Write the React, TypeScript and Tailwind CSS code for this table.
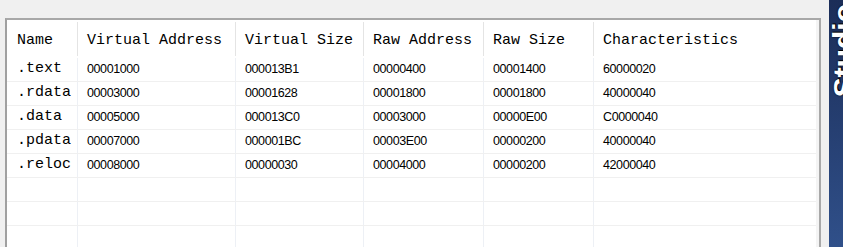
import React from 'react';

const cols = [
  { key: 'name', label: 'Name', w: 'w-[70px]' },
  { key: 'va', label: 'Virtual Address', w: 'w-[158px]' },
  { key: 'vs', label: 'Virtual Size', w: 'w-[128px]' },
  { key: 'ra', label: 'Raw Address', w: 'w-[120px]' },
  { key: 'rs', label: 'Raw Size', w: 'w-[110px]' },
  { key: 'ch', label: 'Characteristics', w: 'w-[223px]' },
];

const sections = [
  ['.text', '00001000', '000013B1', '00000400', '00001400', '60000020'],
  ['.rdata', '00003000', '00001628', '00001800', '00001800', '40000040'],
  ['.data', '00005000', '000013C0', '00003000', '00000E00', 'C0000040'],
  ['.pdata', '00007000', '000001BC', '00003E00', '00000200', '40000040'],
  ['.reloc', '00008000', '00000030', '00004000', '00000200', '42000040'],
  ['', '', '', '', '', ''],
  ['', '', '', '', '', ''],
  ['', '', '', '', '', ''],
];

const mono = "font-['Liberation_Mono',monospace]";

export default function App() {
  return (
    <div className="w-[843px] h-[247px] bg-[#f0f0f0] flex overflow-hidden">
      <div className="flex-1 pt-[18px] pl-[5px] pr-[8px]">
        <div className="h-full border-2 border-b-0 border-[#a8a8a8] border-l-[#a0a0a0] bg-white flex">
          <div className="flex-1">
            {/* header */}
            <div className="flex h-[38px]">
              {cols.map((c, i) => (
                <div
                  key={c.key}
                  className={`${c.w} flex items-center pt-[5px] ${i === 0 ? 'pl-[10px]' : 'pl-[9px] border-l border-[#e4e4e4]'} my-[2px] text-[15px] text-black ${mono} whitespace-nowrap`}
                >
                  {c.label}
                </div>
              ))}
            </div>
            {/* rows */}
            {sections.map((r, ri) => (
              <div key={ri} className="flex h-[24px] border-b border-[#f0f0f0]">
                {r.map((v, ci) => (
                  <div
                    key={ci}
                    className={`${cols[ci].w} flex items-center ${ci === 0 ? `pl-[10px] text-[15px] ${mono}` : "pl-[9px] border-l border-[#edf0f5] text-[12.5px] tracking-[-0.4px] font-['Liberation_Sans',Arial,sans-serif]"} text-black whitespace-nowrap`}
                  >
                    {v}
                  </div>
                ))}
              </div>
            ))}
          </div>
          <div className="w-[3px] bg-[#f4f4f4]" />
        </div>
      </div>
      <div className="w-[14px] relative overflow-hidden bg-gradient-to-b from-[#1b2d58] to-[#30508a]">
        <span className="absolute left-[0px] bottom-[150px] [writing-mode:vertical-rl] rotate-180 text-[30px] leading-none font-bold text-white font-['Liberation_Sans',Arial,sans-serif] [text-shadow:0_0_2px_#000,1px_1px_0_#000] whitespace-nowrap">
          Studio
        </span>
      </div>
    </div>
  );
}
